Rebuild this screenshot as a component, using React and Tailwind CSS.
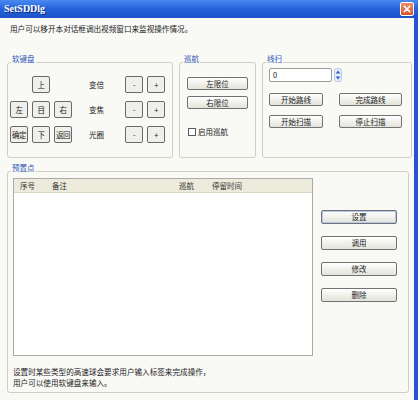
import React from "react";

const Btn = ({ className = "", children }) => (
  <div
    className={
      "flex items-center justify-center border border-[#727272] rounded-[2px] bg-linear-to-b from-white to-[#e3e3da] text-[7.5px] leading-none text-[#222] " +
      className
    }
  >
    {children}
  </div>
);

const Key = ({ children }) => (
  <div className="w-[18px] h-[17px] flex items-center justify-center border border-[#6a6a6a] rounded-[2px] bg-[#efefeb] text-[7.5px] leading-none text-[#222] whitespace-nowrap tracking-[-0.5px]">
    {children}
  </div>
);

const Group = ({ label, className = "", children }) => (
  <div className={"relative border border-[#cfcfc2] rounded-[3px] " + className}>
    <span className="absolute top-[-9px] left-[3px] px-[1px] bg-[#f9f9f6] text-[#2f55b8] text-[7.5px] leading-[10px]">
      {label}
    </span>
    {children}
  </div>
);

const KeyRow = ({ keys, label }) => (
  <div className="h-[17px] flex items-center">
    <div className="flex gap-[4px] w-[62px]">
      {keys.map((k, i) =>
        k ? <Key key={i}>{k}</Key> : <div key={i} className="w-[18px] h-[17px]" />
      )}
    </div>
    <span className="w-[53px] pl-[17px] text-[7.5px] leading-none">{label}</span>
    <div className="flex gap-[4px]">
      <Key>-</Key>
      <Key>+</Key>
    </div>
  </div>
);

export default function App() {
  return (
    <div className="w-[418px] h-[400px] bg-[#f9f9f6] flex flex-col overflow-hidden font-['Noto_Sans_CJK_SC',sans-serif] text-[#1c1c1c]">
      {/* title bar */}
      <div className="h-[18px] flex items-center justify-between pl-[4px] pr-[4px] bg-linear-to-b from-[#4a8af2] via-[#2462da] to-[#1c52c8]">
        <span className="font-['Liberation_Serif',serif] font-bold text-[10px] leading-none text-white [text-shadow:1px_1px_0_#0a2a80]">
          SetSDDlg
        </span>
        <div className="w-[14px] h-[14px] rounded-[2px] border border-white bg-linear-to-b from-[#ee8a66] to-[#d9502a] flex items-center justify-center">
          <svg width="8" height="8" viewBox="0 0 8 8">
            <path d="M1.2 1.2 L6.8 6.8 M6.8 1.2 L1.2 6.8" stroke="white" strokeWidth="1.6" strokeLinecap="round" />
          </svg>
        </div>
      </div>

      {/* body */}
      <div className="flex-1 flex flex-col border-r-[4px] border-[#2456d4] pl-[7px]">
        <div className="mt-[6px] pl-[3px] text-[7.6px] leading-[10px]">
          用户可以移开本对话框调出视频窗口来监视操作情况。
        </div>

        {/* top groups */}
        <div className="mt-[28px] flex gap-[6px]">
          <Group label="软键盘" className="w-[166px] h-[96px]">
            <div className="pt-[13px] pl-[2px] flex flex-col gap-[8px]">
              <KeyRow keys={["", "上", ""]} label="变倍" />
              <KeyRow keys={["左", "目", "右"]} label="变焦" />
              <KeyRow keys={["确定", "下", "返回"]} label="光圈" />
            </div>
          </Group>

          <Group label="巡航" className="w-[77px] h-[96px]">
            <div className="pt-[14px] pl-[7px] flex flex-col">
              <Btn className="w-[61px] h-[13px]">左限位</Btn>
              <Btn className="w-[61px] h-[13px] mt-[6px]">右限位</Btn>
              <div className="mt-[19px] ml-[1px] flex items-center gap-[2px]">
                <div className="w-[8px] h-[8px] border border-[#5a5a5a] bg-white" />
                <span className="text-[7.5px] leading-none">启用巡航</span>
              </div>
            </div>
          </Group>

          <Group label="线扫" className="w-[150px] h-[96px]">
            <div className="pt-[5px] pl-[6px] flex flex-col">
              <div className="flex items-center gap-[2px]">
                <div className="w-[63px] h-[14px] border border-[#9c9c9c] rounded-[2px] bg-white flex items-center pl-[3px] text-[7.5px] leading-none">
                  0
                </div>
                <svg width="8" height="14" viewBox="0 0 8 14">
                  <rect x="0.5" y="0.5" width="7" height="13" rx="2" fill="#e4ecf8" stroke="#b8c8e4" />
                  <path d="M4 2.5 L6.3 5.6 L1.7 5.6 Z" fill="#2d5ec9" />
                  <path d="M4 11.5 L6.3 8.4 L1.7 8.4 Z" fill="#2d5ec9" />
                </svg>
              </div>
              <div className="mt-[11px] flex">
                <Btn className="w-[54px] h-[13px]">开始路线</Btn>
                <Btn className="w-[63px] h-[13px] ml-[16px]">完成路线</Btn>
              </div>
              <div className="mt-[9px] flex">
                <Btn className="w-[54px] h-[13px]">开始扫描</Btn>
                <Btn className="w-[63px] h-[13px] ml-[16px]">停止扫描</Btn>
              </div>
            </div>
          </Group>
        </div>

        {/* preset group */}
        <Group label="预置点" className="mt-[13px] w-[402px] h-[222px]">
          <div className="pt-[6px] pl-[5px] flex flex-col">
            <div className="flex">
              <div className="w-[300px] h-[178px] border border-[#aaaaaa] bg-white flex flex-col">
                <div className="h-[14px] bg-[#ecebdc] border-b border-[#d8d7c8] flex items-center text-[7.5px] leading-none text-[#333]">
                  <span className="w-[32px] pl-[6px]">序号</span>
                  <span className="w-[127px] pl-[6px]">备注</span>
                  <span className="w-[33px] pl-[6px]">巡航</span>
                  <span className="pl-[6px]">停留时间</span>
                </div>
              </div>
              <div className="ml-[8px] pt-[32px] flex flex-col gap-[12px]">
                <Btn className="w-[76px] h-[14px] border-[#3f5b88] shadow-[inset_0_0_0_1px_#b2c6ee]">设置</Btn>
                <Btn className="w-[76px] h-[14px]">调用</Btn>
                <Btn className="w-[76px] h-[14px]">修改</Btn>
                <Btn className="w-[76px] h-[14px]">删除</Btn>
              </div>
            </div>
            <div className="mt-[10px] text-[7.6px] leading-[11px]">
              <div>设置时某些类型的高速球会要求用户输入标签来完成操作，</div>
              <div>用户可以使用软键盘来输入。</div>
            </div>
          </div>
        </Group>
      </div>
    </div>
  );
}
